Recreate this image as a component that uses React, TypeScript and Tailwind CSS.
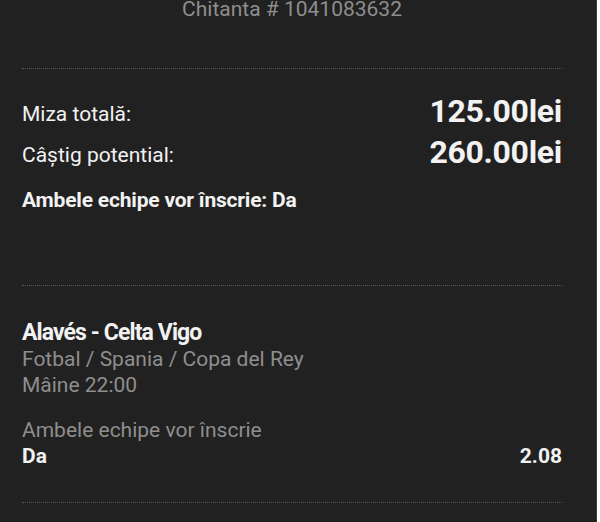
import React from "react";

function Dots() {
  return <div className="border-t border-dotted border-[#5a5a5a]" />;
}

export default function App() {
  return (
    <div className="flex h-[522px] w-[600px] overflow-hidden bg-white">
      <div
        className="w-[597px] overflow-hidden border-r border-[#3a3a3a] bg-[#212121] pl-[22px] pr-[34px] text-[#f2f2f2]"
        style={{ fontFamily: "Roboto, 'Noto Sans', sans-serif" }}
      >
        <div className="-mt-[3px] text-center text-[21px] leading-[24px] text-[#8e8e8e]">
          Chitanta # 1041083632
        </div>

        <div className="mt-[47px]">
          <Dots />
        </div>

        <div className="pt-[25px]">
          <div className="flex items-center justify-between">
            <span className="text-[21px] leading-[41px]">Miza totală:</span>
            <span className="mb-[6px] text-[32px] font-bold leading-[35px] tracking-[-0.3px]">125.00lei</span>
          </div>
          <div className="flex items-center justify-between">
            <span className="text-[21px] leading-[41px]">Câștig potential:</span>
            <span className="mb-[6px] text-[32px] font-bold leading-[35px] tracking-[-0.3px]">260.00lei</span>
          </div>
          <div className="mt-[12px] text-[21px] font-bold leading-[24px] tracking-[-0.2px]">
            Ambele echipe vor înscrie: Da
          </div>
        </div>

        <div className="mt-[73px]">
          <Dots />
        </div>

        <div className="pt-[34px]">
          <div className="text-[23px] font-bold leading-[26px] tracking-[-0.9px]">Alavés - Celta Vigo</div>
          <div className="text-[21px] leading-[26px] text-[#8e8e8e]">Fotbal / Spania / Copa del Rey</div>
          <div className="text-[21px] leading-[26px] text-[#8e8e8e]">Mâine 22:00</div>
          <div className="mt-[19px] text-[21px] leading-[26px] text-[#8e8e8e]">Ambele echipe vor înscrie</div>
          <div className="flex items-center justify-between">
            <span className="text-[21px] font-bold leading-[26px]">Da</span>
            <span className="text-[21px] font-bold leading-[26px]">2.08</span>
          </div>
        </div>

        <div className="mt-[33px]">
          <Dots />
        </div>
      </div>
    </div>
  );
}
